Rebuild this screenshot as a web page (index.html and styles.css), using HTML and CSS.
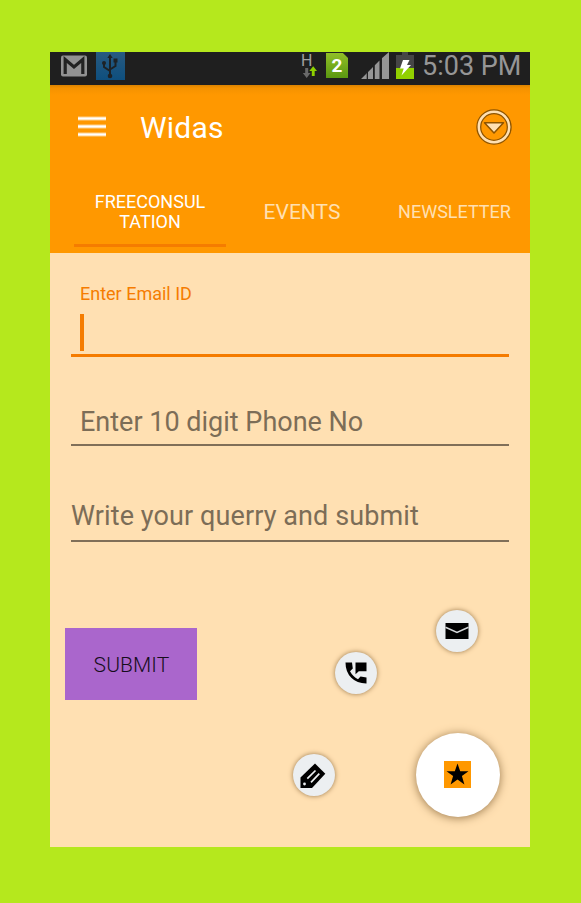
FILE: index.html
```html
<!DOCTYPE html>
<html lang="en">
<head>
<meta charset="utf-8">
<title>Widas</title>
<link rel="stylesheet" href="styles.css">
</head>
<body>
<main class="phone">
  <div class="status">
    <svg class="gmail" width="28" height="24" viewBox="0 0 28 24"><rect x="1" y="1.5" width="26" height="21" rx="2" fill="#929292"/><path d="M5.2 20V5.5L14 13l8.800-7.500V20" fill="none" stroke="#222" stroke-width="3.200"/></svg>
    <svg class="usb" width="29" height="28" viewBox="0 0 29 28"><defs><linearGradient id="blue" x2="0" y2="1"><stop offset="0" stop-color="#285a80"/><stop offset="1" stop-color="#0e4f7e"/></linearGradient></defs><rect width="29" height="28" fill="url(#blue)"/><g fill="none" stroke="#1d2226" stroke-width="2"><path d="M14 4v20M8 11v4l6 4M19.500 9v5L14 17.500"/></g><g fill="#1d2226"><path d="M14 2l2.700 4h-5.400z"/><circle cx="14" cy="24" r="2.300"/><circle cx="8" cy="11" r="2"/><path d="M17.500 6.500h4v4h-4z"/></g></svg>
    <span class="network"><span class="net-type">H</span><svg width="15" height="12" viewBox="0 0 15 12"><path d="M3.200 2h3v5h2.300L4.700 12 .800 7h2.400z" fill="#696969"/><path d="M9.800 10V5H7.300L11.200.300 15 5h-2.300v5z" fill="#8ed000"/></svg></span>
    <span class="sim">2</span>
    <svg class="signal" width="28" height="27" viewBox="0 0 28 27"><path d="M0 27l6-6v6zM7 20l5-5v12H7zM13.500 13.500l5-5V27h-5zM20 7l8-7v27h-8z" fill="#969696"/><path d="M6.300 19v8M13 13v14M20.400 6v21" stroke="#222" stroke-width="1.200"/></svg>
    <svg class="battery" width="18" height="27" viewBox="0 0 18 27"><path d="M6 0h6v3h6v24H0V3h6z" fill="#464646"/><path d="M0 16h18v11H0z" fill="#91d000"/><path d="M7 8h6.500L11 13h4L5.500 23.500 7.700 16.500H4z" fill="#fff"/></svg>
    <span class="time">5:03 PM</span>
  </div>
  <header class="header">
    <div class="toolbar">
      <svg class="menu" width="28" height="22" viewBox="0 0 28 22"><path d="M0 2.500h28M0 10.500h28M0 18.500h28" stroke="#ffd08a" stroke-width="4"/><path d="M0 2.500h28M0 10.500h28M0 18.500h28" stroke="#fff" stroke-width="2"/></svg>
      <h1 class="title">Widas</h1>
      <svg class="dropdown" width="36" height="36" viewBox="0 0 36 36"><circle cx="18" cy="18" r="15.200" fill="none" stroke="#8d5400" stroke-width="5"/><circle cx="18" cy="18" r="15.200" fill="none" stroke="#ffe0b2" stroke-width="2.500"/><path d="M8.500 13.800h19L18 24z" fill="#ffe0b2" stroke="#8d5400" stroke-width="1.500" stroke-linejoin="round"/></svg>
    </div>
    <nav class="tabs">
      <span class="tab active"><span>FREECONSUL<br>TATION</span></span>
      <span class="tab events">EVENTS</span>
      <span class="tab newsletter">NEWSLETTER</span>
    </nav>
  </header>
  <section class="form">
    <div class="field email"><span class="label">Enter Email ID</span><span class="caret"></span></div>
    <div class="field number"><span>Enter 10 digit Phone No</span></div>
    <div class="field query"><span>Write your querry and submit</span></div>
    <button class="submit"><span>SUBMIT</span></button>
    <span class="fab mail"><svg width="24" height="18" viewBox="0 0 24 18"><path d="M.500 1h23v16H.500z"/><path d="M.500 5.300L12 10.500l11.500-5.200" fill="none" stroke="#d4d7d9" stroke-width="1.500"/></svg></span>
    <span class="fab call"><svg width="22" height="22" viewBox="0 0 22 22"><path d="M.500.500H7l.800 6L5 9.300Q7.700 14.500 13 17.200l2.500-2.700 6 .900v6Q12 21.500 6.300 15.700.500 10 .500.500z"/><path d="M10.500.500h11v8.700h-7.700l-3.300 3z"/></svg></span>
    <span class="fab edit"><svg width="26" height="26" viewBox="0 0 26 26"><path d="M.500 14.500L15 .500l10.300 10.200L12 25H.500z"/><path d="M7.300 15.700L15.500 7.500M11 19.300l8.300-8.600" fill="none" stroke="#eceff1" stroke-width="1.700"/><circle cx="4.500" cy="21" r="1.400" fill="#eceff1"/></svg></span>
    <span class="fab main"><svg width="27" height="27" viewBox="0 0 27 27"><path d="M0 0h27v27H0z" fill="#ff9800"/><path d="M13.500 2.500l2.700 7.700h8.300l-6.600 4.900 2.500 8.400-6.900-5.100-6.900 5.100 2.500-8.400-6.600-4.900h8.300z"/></svg></span>
  </section>
</main>
</body>
</html>
```
FILE: styles.css
```css
* { box-sizing: border-box; }
body {
  margin: 0;
  height: 903px;
  padding: 52px 51px 56px 50px;
  background: #b5e81d;
  font-family: Roboto, "Liberation Sans", sans-serif;
}
.phone { width: 480px; height: 795px; background: #ffe0b2; }
svg { display: block; flex: none; }
.status { display: flex; align-items: flex-start; height: 33px; padding-left: 10px; background: #1f1f1f; }
.gmail { margin-top: 2px; }
.usb { margin-left: 8px; }
.network { width: 18px; margin: 2px 0 0 175px; color: #a2a2a2; }
.net-type { display: block; height: 12px; padding-left: 1px; font: 400 16px/14px Roboto, sans-serif; }
.network svg { margin: 0 0 0 2px; }
.sim {
  width: 22px; height: 25px; margin: 1px 0 0 8px;
  background: linear-gradient(#91bf27, #5b9811);
  clip-path: polygon(0 0, 77% 0, 100% 20%, 100% 100%, 0 100%);
  color: #fff; font-size: 19px; font-weight: 700; line-height: 25px; text-align: center;
}
.signal { margin-left: 13px; }
.battery { margin-left: 7px; }
.time { margin-left: 8px; color: #969696; font-size: 27px; line-height: 29px; letter-spacing: 0; white-space: nowrap; }

.header { height: 168px; background: linear-gradient(#da8200, #f59200 3px, #ff9800 10px); color: #fff; }
.toolbar { display: flex; align-items: center; height: 84px; padding: 0 18px 0 28px; }
.title { flex: 1; margin: 1px 0 0 34px; font-size: 30px; font-weight: 400; line-height: 36px; letter-spacing: 0.2px; }
.menu { margin-top: -1px; }
.tabs { display: flex; height: 84px; padding-left: 24px; }
.tab { flex: none; display: flex; align-items: center; justify-content: center; color: #ffe0b2; white-space: nowrap; }
.active { width: 152px; height: 78px; padding-top: 11px; border-bottom: 3px solid #f57c00; color: #fff; font-size: 18px; line-height: 20px; text-align: center; }
.events { width: 152px; padding-top: 2px; font-size: 21px; }
.newsletter { width: 153px; font-size: 18px; }

.form { position: relative; height: 594px; padding: 27px 21px 0; }
.field { color: #7c6d57; font-size: 27px; line-height: 32px; white-space: nowrap; }
.email { height: 77px; padding: 3px 9px 0; border-bottom: 3px solid #f57c00; color: #f57c00; }
.label { display: block; height: 31px; font-size: 18px; line-height: 22px; }
.caret { display: block; width: 4px; height: 37px; background: #f57c00; }
.number { height: 89px; padding: 49px 9px 0; border-bottom: 2px solid #806f58; }
.query { height: 96px; padding-top: 54px; border-bottom: 2px solid #806f58; letter-spacing: 0.1px; }
.submit { display: block; width: 132px; height: 72px; margin: 86px 0 0 -6px; padding: 2px 0 0 1px; border: 0; background: #aa66cc; color: #160d1b; font: 300 21px Roboto, sans-serif; letter-spacing: 0.1px; }
.fab { position: absolute; display: flex; align-items: center; justify-content: center; width: 42px; height: 42px; border-radius: 50%; background: #eceff1; box-shadow: 0 0 5px #9a784c; }
.mail { left: 386px; top: 357px; }
.call { left: 285px; top: 399px; }
.call svg { margin: 0 1px 1px 0; }
.edit { left: 243px; top: 501px; }
.edit svg { margin: 2px 3px 0 0; }
.main { left: 366px; top: 480px; width: 84px; height: 84px; background: #fff; box-shadow: 0 1px 10px #9a784c; }
.main svg { margin: 0 1px 1px 0; }
```
